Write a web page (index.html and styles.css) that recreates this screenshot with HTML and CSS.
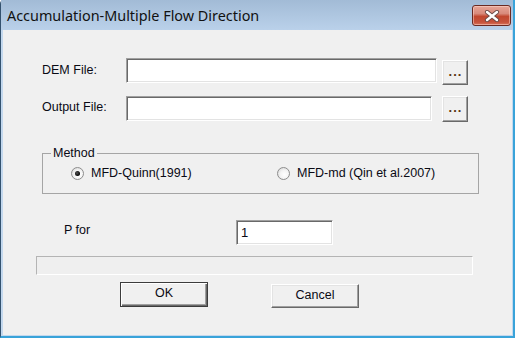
FILE: index.html
```html
<!DOCTYPE html>
<html>
<head>
<meta charset="utf-8">
<link rel="stylesheet" href="styles.css">
</head>
<body>
<div class="window">
  <div class="titlebar">
    <span class="title">Accumulation-Multiple Flow Direction</span>
    <div class="close">
      <svg width="16" height="12" viewBox="0 0 16 12">
        <path d="M3 2 L13 10 M13 2 L3 10" stroke="#6b4a48" stroke-width="4.2" stroke-linecap="round" fill="none"/>
        <path d="M3 2 L13 10 M13 2 L3 10" stroke="#ffffff" stroke-width="2.4" stroke-linecap="round" fill="none"/>
      </svg>
    </div>
  </div>
  <div class="frame">
    <div class="client">
      <div class="row row-dem">
        <span class="label lbl-dem">DEM File:</span>
        <div class="edit edit-dem"></div>
        <div class="btn dots dots-dem">...</div>
      </div>
      <div class="row row-out">
        <span class="label lbl-out">Output File:</span>
        <div class="edit edit-out"></div>
        <div class="btn dots dots-out">...</div>
      </div>
      <fieldset class="group">
        <legend class="legend">Method</legend>
        <div class="radios">
          <div class="opt opt1"><span class="radio checked"></span><span>MFD-Quinn(1991)</span></div>
          <div class="opt"><span class="radio"></span><span>MFD-md (Qin et al.2007)</span></div>
        </div>
      </fieldset>
      <div class="row row-p">
        <span class="label lbl-p">P for</span>
        <div class="edit edit-p">1</div>
      </div>
      <div class="progress"></div>
      <div class="row row-btns">
        <div class="btn push default">OK</div>
        <div class="btn push cancel">Cancel</div>
      </div>
    </div>
  </div>
</div>
</body>
</html>
```

FILE: styles.css
```css
html, body {
  margin: 0;
  padding: 0;
}
body {
  width: 515px;
  height: 338px;
  overflow: hidden;
  font-family: "Liberation Sans", Arial, sans-serif;
  font-size: 12.5px;
  color: #0a0a14;
}
.window {
  width: 515px;
  height: 338px;
  box-sizing: border-box;
  border-left: 1px solid #34526f;
  border-right: 2px solid #39a3d9;
  border-bottom: 2px solid #39a3d9;
  border-top-left-radius: 4px;
  background: linear-gradient(#a3bcd6 0px, #b6cde6 30px, #c3d8ee 60px, #c3d8ee 100%);
  display: flex;
  flex-direction: column;
}
.titlebar {
  height: 30px;
  display: flex;
  align-items: flex-start;
  justify-content: space-between;
  background: linear-gradient(#a2bbd6, #bad1ea);
}
.title {
  font-family: "Noto Sans", "Open Sans", sans-serif;
  font-size: 14.4px;
  line-height: 20px;
  margin-top: 6px;
  margin-left: 6px;
  color: #111;
}
.close {
  width: 37px;
  height: 19px;
  margin-top: 5px;
  margin-right: 2px;
  border: 1px solid #6a2a22;
  border-radius: 3px;
  background: linear-gradient(#e7a597 0%, #d88a7b 40%, #c1472f 55%, #c6533c 85%, #d9745c 100%);
  box-shadow: inset 0 0 0 1px rgba(255, 220, 210, 0.5);
  display: flex;
  align-items: center;
  justify-content: center;
}
.frame {
  padding: 0 1px 1px 2px;
  background: #c3d8ee;
  flex: 1;
  display: flex;
}
.client {
  flex: 1;
  background: #f0f0f0;
  padding-top: 28px;
  display: flex;
  flex-direction: column;
  align-items: flex-start;
}
.row {
  display: flex;
  align-items: flex-start;
}
.label {
  line-height: 14px;
}
.edit {
  height: 25px;
  box-sizing: border-box;
  background: #fff;
  border-top: 1px solid #a0a0a0;
  border-left: 1px solid #a0a0a0;
  border-bottom: 1px solid #fff;
  border-right: 1px solid #fff;
  box-shadow: inset 1px 1px 0 #696969, inset -1px -1px 0 #e3e3e3;
  line-height: 23px;
  padding-left: 4px;
  font-size: 13px;
}
.btn {
  box-sizing: border-box;
  background: #f0f0f0;
  border-top: 1px solid #fff;
  border-left: 1px solid #fff;
  border-right: 1px solid #696969;
  border-bottom: 1px solid #696969;
  box-shadow: inset -1px -1px 0 #a0a0a0, inset 1px 1px 0 #e3e3e3;
  text-align: center;
}
.row-dem {
  margin-left: 39px;
}
.lbl-dem {
  width: 84px;
  margin-top: 5px;
}
.edit-dem {
  width: 311px;
}
.dots {
  width: 26px;
  font-weight: bold;
  font-size: 13px;
  color: #5a3512;
  line-height: 21px;
  letter-spacing: 1px;
  padding-left: 1px;
}
.dots-dem {
  height: 25px;
  margin-top: 2px;
  margin-left: 5px;
}
.row-out {
  margin-top: 11px;
  margin-left: 39px;
}
.lbl-out {
  width: 84px;
  margin-top: 4px;
}
.edit-out {
  width: 306px;
}
.dots-out {
  height: 26px;
  margin-left: 10px;
}
.group {
  margin: 24px 0 0 39px;
  width: 437px;
  box-sizing: border-box;
  padding: 6px 0 13px 8px;
  border: 1px solid #a5a5a5;
  min-width: 0;
}
.legend {
  padding: 0 2px;
  line-height: 14px;
}
.radios {
  display: flex;
  align-items: center;
  height: 14px;
  margin-left: 20px;
}
.opt {
  display: flex;
  align-items: center;
  gap: 7px;
}
.opt1 {
  width: 206px;
}
.radio {
  width: 13px;
  height: 13px;
  box-sizing: border-box;
  border-radius: 50%;
  border: 1px solid #8d8d8d;
  background: radial-gradient(circle at 60% 60%, #ffffff 0%, #f4f4f4 45%, #d0d0d0 100%);
  display: flex;
  align-items: center;
  justify-content: center;
}
.radio.checked::after {
  content: "";
  width: 5px;
  height: 5px;
  border-radius: 50%;
  background: radial-gradient(circle at 40% 40%, #555 0%, #000 70%);
}
.row-p {
  margin-top: 26px;
  margin-left: 61px;
}
.lbl-p {
  width: 172px;
  margin-top: 3px;
}
.edit-p {
  width: 97px;
}
.progress {
  margin-top: 11px;
  margin-left: 33px;
  width: 437px;
  height: 19px;
  box-sizing: border-box;
  border-top: 1px solid #b4b4b4;
  border-left: 1px solid #b4b4b4;
  border-bottom: 1px solid #fff;
  border-right: 1px solid #fff;
  background: #efefef;
}
.row-btns {
  margin-top: 7px;
  margin-left: 117px;
}
.push {
  width: 88px;
  line-height: 21px;
}
.default {
  height: 25px;
  border: 1px solid #3c3c3c;
  box-shadow: inset 1px 1px 0 #fff, inset -1px -1px 0 #696969, inset -2px -2px 0 #a0a0a0;
  line-height: 20px;
}
.cancel {
  height: 24px;
  margin-top: 2px;
  margin-left: 63px;
}
```
